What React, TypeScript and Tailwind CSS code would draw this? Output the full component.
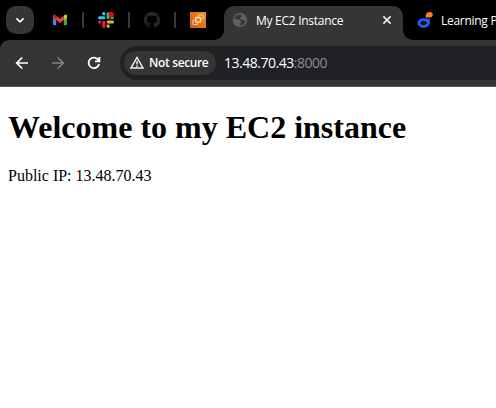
import React from "react";

const uiFont = "font-['Open_Sans','Noto_Sans',sans-serif]";

function Divider() {
  return <span className="h-4 w-[2px] shrink-0 rounded-full bg-[#3a3a3a]" />;
}

function Gmail() {
  return (
    <svg className="shrink-0" width="16" height="16" viewBox="0 0 16 16">
      <path d="M1 4.5 4.2 7v6.3H2A1 1 0 0 1 1 12.3Z" fill="#4285f4" />
      <path d="M15 4.5 11.8 7v6.3H14a1 1 0 0 0 1-1Z" fill="#34a853" />
      <path d="M11.8 3.8 13 2.8c.9-.6 2 0 2 1.1V5.500l-3.200 2.500Z" fill="#fbbc04" />
      <path d="M4.200 3.800 8 6.700l3.800-2.900V8L8 10.900 4.200 8Z" fill="#ea4335" />
      <path d="M1 3.900c0-1.100 1.100-1.700 2-1.100l1.200 1V8L1 5.500Z" fill="#c5221f" />
    </svg>
  );
}

function Slack() {
  return (
    <svg className="shrink-0" width="16" height="16" viewBox="0 0 16 16">
      <g fill="#36c5f0">
        <rect x="0" y="4.300" width="7.300" height="3" rx="1.500" />
        <path d="M7.300 3.300H5.800A1.600 1.600 0 1 1 7.300 1.600Z" />
      </g>
      <g fill="#2eb67d">
        <rect x="8.600" y="0" width="3" height="7.300" rx="1.500" />
        <path d="M12.600 7.300V5.800a1.600 1.600 0 1 1 1.600 1.500Z" />
      </g>
      <g fill="#ecb22e">
        <rect x="8.600" y="8.600" width="7.400" height="3" rx="1.500" />
        <path d="M8.600 12.600h1.500a1.600 1.600 0 1 1-1.500 1.600Z" />
      </g>
      <g fill="#e01e5a">
        <rect x="4.300" y="8.600" width="3" height="7.400" rx="1.500" />
        <path d="M3.300 8.600v1.500a1.600 1.600 0 1 1-1.600-1.500Z" />
      </g>
      <circle cx="13.400" cy="2.600" r="2.600" fill="#f00" />
    </svg>
  );
}

function Github() {
  return (
    <svg className="shrink-0" width="16" height="16" viewBox="0 0 16 16" fill="#24292e">
      <path d="M8 0C3.58 0 0 3.58 0 8c0 3.54 2.29 6.53 5.47 7.59.4.07.55-.17.55-.38 0-.19-.01-.82-.01-1.490-2.010.370-2.530-.490-2.690-.940-.090-.230-.480-.940-.820-1.130-.280-.150-.680-.520-.010-.530.630-.010 1.080.580 1.230.820.720 1.210 1.870.870 2.330.660.070-.520.280-.870.510-1.070-1.780-.200-3.640-.890-3.640-3.950 0-.870.310-1.590.820-2.150-.080-.200-.360-1.020.080-2.120 0 0 .670-.210 2.200.820.640-.180 1.320-.270 2-.270s1.360.090 2 .270c1.530-1.040 2.200-.820 2.200-.820.440 1.100.160 1.920.080 2.120.510.560.820 1.270.820 2.150 0 3.070-1.870 3.750-3.650 3.950.290.250.540.730.540 1.480 0 1.070-.010 1.930-.010 2.200 0 .210.150.460.550.380A8.010 8.010 0 0 0 16 8c0-4.420-3.580-8-8-8Z" />
    </svg>
  );
}

function Ec2() {
  return (
    <svg className="shrink-0" width="16" height="16" viewBox="0 0 16 16" fill="none">
      <defs>
        <linearGradient id="orange" x1="0" y1="1" x2="1" y2="0">
          <stop stopColor="#cf5b0d" />
          <stop offset="1" stopColor="#f58f1c" />
        </linearGradient>
      </defs>
      <path d="M0 0h16v16H0Z" fill="url(#orange)" />
      <g stroke="#fbe3c8" strokeWidth="1">
        <rect x="5.800" y="5.500" width="4.700" height="4.700" rx=".5" strokeWidth="1.300" />
        <path d="M8.500 4.500V3.500q0-.6.600-.6h3.400q.6 0 .6.600v3.400q0 .6-.6.600H11.500M4.900 7.900H3.500q-.6 0-.6.600v3.500q0 .6.600.6h3.400q.6 0 .6-.6v-.8" strokeOpacity=".85" />
      </g>
    </svg>
  );
}

function Globe() {
  return (
    <svg className="shrink-0" width="16" height="16" viewBox="0 0 16 16">
      <circle cx="8" cy="8" r="7.100" fill="#5f6368" />
      <path d="M2.300 7.300h3.800c1.600 0 1.900.8 1.900 2h1.500v1.600H7.700v2.400c3 .1 5.500-2.100 5.700-4.800-.8.300-1.600.1-1.900-.7H9.600c-1 0-1.700-.8-1.700-1.800V4.900h1.900V3c-3.500-1.200-7.200.8-7.500 4.300Z" fill="#353535" />
    </svg>
  );
}

function Flare({ right = false }: { right?: boolean }) {
  return (
    <svg className="shrink-0" width="10" height="10" viewBox="0 0 10 10" fill="#353535">
      <path d={right ? "M0 0A10 10 0 0 0 10 10H0Z" : "M10 0A10 10 0 0 1 0 10H10Z"} />
    </svg>
  );
}

function TabStrip() {
  return (
    <header className="flex h-10 bg-black">
      <div className="flex h-10 w-[214px] shrink-0 items-center pl-[6px]">
        <button className="flex size-7 shrink-0 items-center justify-center rounded-[10px] bg-[#353535]" aria-label="Search tabs">
          <svg width="10" height="10" viewBox="0 0 10 10" fill="none" stroke="white" strokeWidth="1.700">
            <path d="m1.400 3.300 3.600 3.500 3.600-3.500" />
          </svg>
        </button>
        <div className="ml-[18px] flex items-center gap-[14px]">
          <Gmail /><Divider /><Slack /><Divider /><Github /><Divider /><Ec2 />
        </div>
      </div>
      <div className="flex items-end"><Flare /></div>
      <div className="mt-[6px] flex h-[34px] w-[179px] shrink-0 items-center rounded-t-[10px] bg-[#353535] pb-[6px] pl-2 pr-[11px]">
        <Globe />
        <span className="ml-2 whitespace-nowrap pt-[2px] text-[12px] leading-4 tracking-[-0.280px] text-white">My EC2 Instance</span>
        <svg className="ml-auto" width="10" height="10" viewBox="0 0 10 10" stroke="#eee" strokeWidth="1.600">
          <path d="m1.400 1.400 7.200 7.200M8.600 1.400 1.400 8.600" />
        </svg>
      </div>
      <div className="flex items-end"><Flare right /></div>
      <div className="flex min-w-0 flex-1 items-center pl-1">
        <svg className="shrink-0" width="16" height="18" viewBox="0 0 16 18">
          <ellipse cx="6.600" cy="12" rx="4.600" ry="3.400" fill="none" stroke="#1f62f5" strokeWidth="2.900" />
          <path d="M9 7.800h3.600c.6 1.500.5 3.200 0 4.600Z" fill="#1f62f5" />
          <path d="M8.800 4.500C9.200 2 10.600 1 12.600 1c2 0 3.300 1 3.200 2.700C15.600 5.700 14 6.600 12 6.600H8.700Z" fill="#ff7f27" />
        </svg>
        <span className="ml-2 whitespace-nowrap pt-[2px] text-[12px] leading-4 tracking-[-0.280px] text-white">Learning P</span>
      </div>
    </header>
  );
}

function Toolbar() {
  return (
    <div className="bg-black">
      <nav className="flex h-[47px] items-start rounded-tl-[9px] border-b border-[#5c5b5b] bg-[#353535] pl-[14px] pt-[6px]">
        <div className="flex h-[34px] items-center gap-5">
          <svg width="16" height="16" viewBox="0 0 16 16" fill="none" stroke="white" strokeWidth="1.700">
            <path d="M14 8H3M8.200 2.500 2.700 8l5.500 5.500" />
          </svg>
          <svg width="16" height="16" viewBox="0 0 16 16" fill="none" stroke="#818181" strokeWidth="1.700">
            <path d="M2 8h11M7.800 2.500 13.300 8l-5.500 5.500" />
          </svg>
          <svg width="16" height="16" viewBox="0 0 16 16" fill="none" stroke="white" strokeWidth="1.800">
            <path d="M13.100 9A5.300 5.300 0 1 1 12.500 5.200M13.400 2v4.300H9" />
          </svg>
        </div>
        <div className="ml-[18px] flex h-[34px] flex-1 items-center rounded-l-full bg-[#202124] pl-1">
          <div className="flex h-6 w-[92px] items-center rounded-full bg-[#353535] pl-[5px]">
            <svg className="shrink-0" width="16" height="16" viewBox="0 0 16 16" fill="none" stroke="#eee" strokeWidth="1.500">
              <path d="M8 2.500 14 13H2ZM8 5.900v3.500M8 10.500V12" />
            </svg>
            <span className="ml-1 whitespace-nowrap text-[12px] font-semibold leading-4 tracking-[-0.360px] text-white">Not secure</span>
          </div>
          <span className="ml-2 whitespace-nowrap text-[14px] leading-5 tracking-[-0.480px] text-white"><span className="font-medium">13.48.70.43</span><span className="text-[#8b8d90]">:8000</span></span>
        </div>
      </nav>
    </div>
  );
}

export default function App() {
  return (
    <div className={`h-[408px] w-[496px] overflow-hidden bg-white ${uiFont}`}>
      <TabStrip />
      <Toolbar />
      <main className="px-2 pt-[22px] font-['Liberation_Serif',serif] text-black">
        <h1 className="text-[32px] font-bold leading-[37px]">Welcome to my EC2 instance</h1>
        <p className="mt-[21px] text-[16px] leading-[18px]">Public IP: 13.48.70.43</p>
      </main>
    </div>
  );
}
